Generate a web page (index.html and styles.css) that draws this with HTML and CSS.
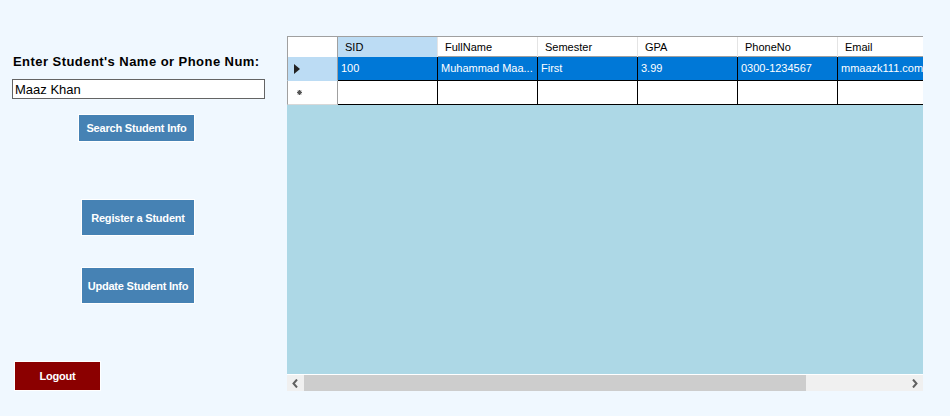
FILE: index.html
```html
<!DOCTYPE html>
<html>
<head>
<meta charset="utf-8">
<link rel="stylesheet" href="styles.css">
</head>
<body>
<div class="app">
  <aside class="side">
    <label class="prompt" for="q">Enter Student's Name or Phone Num:</label>
    <input id="q" class="search-box" type="text" value="Maaz Khan">
    <button class="btn btn-search">Search Student Info</button>
    <button class="btn btn-register">Register a Student</button>
    <button class="btn btn-update">Update Student Info</button>
    <button class="btn btn-logout">Logout</button>
  </aside>
  <section class="grid-wrap">
    <div class="grid-view">
      <div class="row head">
        <div class="rh"></div>
        <div class="hc sel">SID</div>
        <div class="hc">FullName</div>
        <div class="hc">Semester</div>
        <div class="hc">GPA</div>
        <div class="hc">PhoneNo</div>
        <div class="hc">Email</div>
      </div>
      <div class="row data current">
        <div class="rh rh-sel">
          <svg width="6" height="10" viewBox="0 0 6 10"><path d="M0 0 L6 5 L0 10 Z" fill="#222"/></svg>
        </div>
        <div class="c">100</div>
        <div class="c">Muhammad Maa...</div>
        <div class="c">First</div>
        <div class="c">3.99</div>
        <div class="c">0300-1234567</div>
        <div class="c">mmaazk111.com</div>
      </div>
      <div class="row data newrow">
        <div class="rh">
          <svg width="5" height="5" viewBox="0 0 5 5"><path d="M2.5 0 V5 M0 2.5 H5 M0.7 0.7 L4.3 4.3 M4.3 0.7 L0.7 4.3" stroke="#555" stroke-width="1.1"/></svg>
        </div>
        <div class="c"></div>
        <div class="c"></div>
        <div class="c"></div>
        <div class="c"></div>
        <div class="c"></div>
        <div class="c"></div>
      </div>
    </div>
    <div class="hscroll">
      <div class="arrow">
        <svg width="7" height="9" viewBox="0 0 7 9"><path d="M5 0.5 L1.5 4.5 L5 8.5" fill="none" stroke="#606060" stroke-width="2"/></svg>
      </div>
      <div class="track"><div class="thumb"></div></div>
      <div class="arrow">
        <svg width="7" height="9" viewBox="0 0 7 9"><path d="M2 0.5 L5.5 4.5 L2 8.5" fill="none" stroke="#606060" stroke-width="2"/></svg>
      </div>
    </div>
  </section>
</div>
</body>
</html>
```

FILE: styles.css
```css
* { box-sizing: border-box; }

html, body {
  margin: 0;
  padding: 0;
  background: #F0F8FF;
  font-family: "Liberation Sans", Arial, sans-serif;
}

.app {
  display: flex;
  width: 950px;
  height: 416px;
}

.side {
  width: 287px;
  flex: none;
  display: flex;
  flex-direction: column;
  align-items: flex-start;
}

.prompt {
  margin: 54px 0 0 13px;
  font-size: 13px;
  line-height: 16px;
  font-weight: bold;
  letter-spacing: 0.45px;
  color: #000;
}

.search-box {
  margin: 9px 0 0 12px;
  width: 253px;
  height: 20px;
  border: 1px solid #646464;
  background: #fff;
  padding: 0 2px;
  font-family: "Liberation Sans", Arial, sans-serif;
  font-size: 13px;
  color: #000;
  outline: none;
}

.btn {
  border: 1px solid #fff;
  color: #fff;
  font-family: "Liberation Sans", Arial, sans-serif;
  font-weight: bold;
  font-size: 11px;
  letter-spacing: -0.2px;
  padding: 0;
  display: flex;
  align-items: center;
  justify-content: center;
  background: #4682B4;
}

.btn-search {
  margin: 15px 0 0 78px;
  width: 117px;
  height: 28px;
}

.btn-register {
  margin: 57px 0 0 81px;
  width: 114px;
  height: 37px;
}

.btn-update {
  margin: 31px 0 0 81px;
  width: 114px;
  height: 37px;
}

.btn-logout {
  margin: 57px 0 0 14px;
  width: 87px;
  height: 30px;
  background: #8B0000;
}

.grid-wrap {
  margin-top: 36px;
  width: 636px;
  height: 355px;
  background: #ADD8E6;
  display: flex;
  flex-direction: column;
  overflow: hidden;
}

.grid-view {
  flex: 1;
  overflow: hidden;
}

.row {
  display: grid;
  grid-template-columns: 51px repeat(6, 100px);
  width: 651px;
}

.head {
  height: 21px;
  background: #fff;
  border-top: 1px solid #A0A0A0;
  border-bottom: 1px solid #A0A0A0;
}

.head .rh {
  border-left: 1px solid #A0A0A0;
  border-right: 1px solid #A0A0A0;
  background: #fff;
}

.hc {
  font-size: 11px;
  line-height: 19px;
  padding: 1px 0 0 7px;
  color: #000;
  border-right: 1px solid #E4E4E4;
  white-space: nowrap;
}

.hc.sel {
  background: #BCDCF4;
}

.data {
  height: 24px;
}

.data .rh {
  border-left: 1px solid #A0A0A0;
  border-right: 1px solid #A0A0A0;
  border-bottom: 1px solid #D8D8D8;
  background: #fff;
  display: flex;
  align-items: center;
  padding-left: 6px;
}

.data .rh.rh-sel {
  background: #BCDCF4;
  border-bottom-color: #BCDCF4;
}

.newrow .rh {
  padding-left: 9px;
}

.c {
  font-size: 11px;
  line-height: 23px;
  padding-left: 3px;
  border-right: 1px solid #000;
  border-bottom: 1px solid #000;
  background: #fff;
  color: #000;
  white-space: nowrap;
  overflow: hidden;
}

.current .c {
  background: #0078D7;
  color: #fff;
}

.hscroll {
  height: 17px;
  border-top: 1px solid #fff;
  display: flex;
  background: #F0F0F0;
}

.arrow {
  width: 17px;
  flex: none;
  display: flex;
  align-items: center;
  justify-content: center;
}

.track {
  flex: 1;
  display: flex;
}

.thumb {
  width: 502px;
  background: #CDCDCD;
}
```
